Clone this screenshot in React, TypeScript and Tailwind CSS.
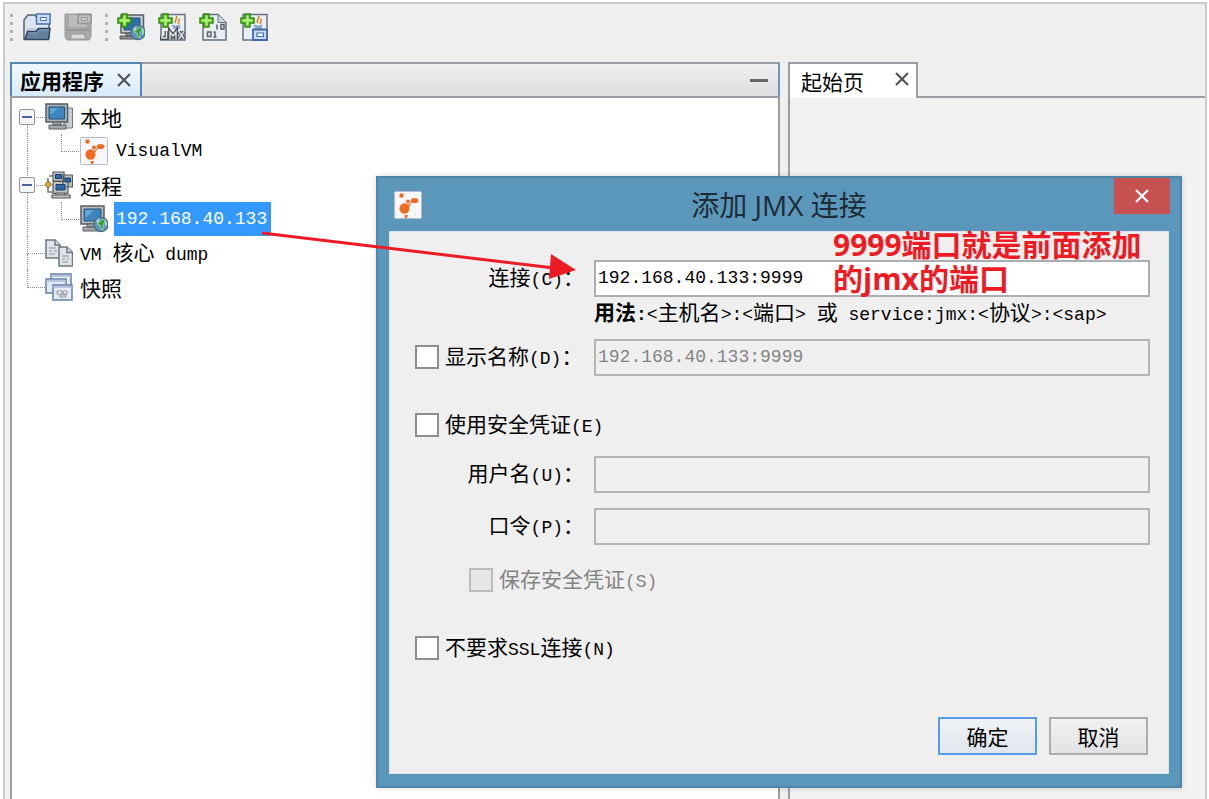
import type { ReactNode } from "react";
import clsx from "clsx";

type IconProps = { className?: string };

function Plus() {
  return (
    <>
      <path d="M5 1h5v4h4v5h-4v4H5v-4H1V5h4z" fill="#7fd63c" stroke="#2f8a12" strokeWidth="1.500" />
      <path d="M7.500 3v9M3 7.500h9" stroke="#b4f07c" strokeWidth="1.800" />
    </>
  );
}

function Globe() {
  return (
    <>
      <circle cx="21" cy="19.500" r="7" fill="#5f97c4" stroke="#4a7387" strokeWidth="1.500" />
      <path d="M16 16a7 7 0 0 1 4-3l-1 3-1 3zM25 14a7 7 0 0 1 2 6l-2 2z" fill="#a9cfe0" />
      <path d="M17 19l6-5 2 2-2 4v5l-2-1-1-4z" fill="#2fa32c" stroke="#c4e6c8" strokeWidth=".6" />
    </>
  );
}

function JavaCup() {
  return (
    <>
      <path
        d="M18 3c3 2-3 4 0 7M22 6c-3 2 0 3-2 5"
        fill="none"
        stroke="#e8862c"
        strokeWidth="1.600"
      />
      <path d="M14 12.500c2 1 6 1 8 0M15 15h7" fill="none" stroke="#6b93c4" strokeWidth="1.500" />
    </>
  );
}

function OpenIcon() {
  return (
    <svg viewBox="0 0 28 28" className="size-7 shrink-0" aria-hidden="true">
      <path d="M1 26V7l4-5h7l2 3h12v20z" fill="#dbe6f2" stroke="#55606c" strokeWidth="1.500" />
      <path d="M3 15h22v6H3z" fill="#c3d2e2" />
      <path d="M13.500 1H27v10H13.500z" fill="#c9dbf6" stroke="#4f74ac" strokeWidth="1.500" />
      <path d="M17.500 4.500h6v3h-6z" fill="#fff" stroke="#4f74ac" />
      <path d="M2 26.500l2.500-8H13l2.500-3H27l-1.500 11z" fill="#64819f" stroke="#34465a" strokeWidth="1.500" />
      <path d="M5.500 20h8.500l2.500-3H26" fill="none" stroke="#89a3bd" />
    </svg>
  );
}

function SaveIcon() {
  return (
    <svg viewBox="0 0 28 28" className="size-7 shrink-0" aria-hidden="true">
      <path d="M1 1h26v23l-2 3H3l-2-3z" fill="#a6a8aa" stroke="#96989a" />
      <path d="M5 2h18v12H5z" fill="#bbbcbe" />
      <path d="M14 1.500h13v9H14z" fill="#bcbec1" stroke="#919497" strokeWidth="1.500" />
      <path d="M17.500 4.500h6v3h-6z" fill="#d0d0d0" stroke="#999" />
      <path d="M2 17h24" stroke="#949698" strokeWidth="2" />
      <path d="M8 21h12l2 5H6z" fill="#dadada" stroke="#999" />
    </svg>
  );
}

function AddHostIcon() {
  return (
    <svg viewBox="0 0 28 28" className="size-7 shrink-0" aria-hidden="true">
      <path d="M4 2h22.500v18H4z" fill="#c9ccce" stroke="#5a6065" strokeWidth="1.500" />
      <path d="M7 5h16v12H7z" fill="#2f6fa8" stroke="#24567f" />
      <path d="M9 20h10v3H9zM3 23h19v3H3z" fill="#8c9196" stroke="#555" />
      <Globe />
      <Plus />
    </svg>
  );
}

function AddJmxIcon() {
  return (
    <svg viewBox="0 0 28 28" className="size-7 shrink-0" aria-hidden="true">
      <path d="M3 1.500h24v25.500H3z" fill="#e9eff7" stroke="#697382" strokeWidth="1.500" />
      <JavaCup />
      <path
        d="M8.500 18v7H4v-2M12 26.500V19l3 4 3-4v7.500M21 18.500l5 7.500M26 18.500L21 26"
        fill="none"
        stroke="#4b5056"
        strokeWidth="4"
      />
      <path
        d="M8.500 18v7H4v-2M12 26.500V19l3 4 3-4v7.500M21 18.500l5 7.500M26 18.500L21 26"
        fill="none"
        stroke="#e4e5e8"
        strokeWidth="1.400"
      />
      <Plus />
    </svg>
  );
}

function AddDumpIcon() {
  return (
    <svg viewBox="0 0 28 28" className="size-7 shrink-0" aria-hidden="true">
      <path d="M4 1.500h15l8 8V27H4z" fill="#e9eef3" stroke="#65727c" strokeWidth="1.500" />
      <path d="M19 1.500v8h8" fill="#cfd7de" stroke="#65727c" />
      <path
        d="M8.500 19h3.500v4.500H8.500zM16 18.500v5.500M18 11.500v5M22 11.500h3v4.500h-3zM14.500 19h1.500M14.500 24h3"
        fill="none"
        stroke="#575e66"
        strokeWidth="1.500"
      />
      <Plus />
    </svg>
  );
}

function AddSnapshotIcon() {
  return (
    <svg viewBox="0 0 28 28" className="size-7 shrink-0" aria-hidden="true">
      <path d="M3 1.500h24v25.500H3z" fill="#e9eff7" stroke="#697382" strokeWidth="1.500" />
      <JavaCup />
      <path d="M13 16.500h14V27H13z" fill="#c9dbf6" stroke="#3f69a8" strokeWidth="1.800" />
      <path d="M17 20h6.500v3.500H17z" fill="#fff" stroke="#3f69a8" strokeWidth="1.200" />
      <Plus />
    </svg>
  );
}

function LocalIcon() {
  return (
    <svg viewBox="0 0 28 28" className="size-7 shrink-0" aria-hidden="true">
      <path d="M19 5h8.500v20H19z" fill="#c9ccd0" stroke="#74797e" />
      <path d="M1 1h21.500v18H1z" fill="#aeb2b6" stroke="#555c62" strokeWidth="1.500" />
      <path d="M4 4h15.500v12H4z" fill="#3d86c2" stroke="#234f78" />
      <path d="M5 5h8l-6 6H5z" fill="#64a5d8" />
      <path d="M8 19h8v3H8zM4 22h17v4H4z" fill="#a4a8ac" stroke="#5b6065" />
    </svg>
  );
}

function VisualVmIcon({ className }: IconProps) {
  return (
    <svg viewBox="0 0 28 28" className={clsx("size-7 shrink-0", className)} aria-hidden="true">
      <rect x=".5" y=".5" width="27" height="27" rx="1" fill="#f6f7fa" stroke="#b4bccb" />
      <g fill="#ef6c22">
        <circle cx="7.500" cy="4.500" r="2.200" />
        <circle cx="14" cy="10.500" r="2" />
        <ellipse cx="20.500" cy="9.500" rx="3.800" ry="2.600" />
        <ellipse cx="10.500" cy="17.500" rx="5" ry="5.200" />
        <path d="M11 12l3 2 5-4-5 7zM10.500 24h3.500l-1 3h-2z" />
      </g>
    </svg>
  );
}

function RemoteIcon() {
  return (
    <svg viewBox="0 0 28 28" className="size-7 shrink-0" aria-hidden="true">
      <path d="M3 7v14h5M4 5h4" fill="none" stroke="#777" strokeWidth="1.500" />
      <g fill="#bfc3bf" stroke="#555b58" strokeWidth="1.200">
        <path d="M8 1h11v9H8zM18 4h9.500v12H18zM8 10.500h15v12H8z" />
        <path d="M11 22h9v2h-9zM7 24h18v3H7z" />
      </g>
      <g fill="#2f68ad" stroke="#1d3c69">
        <path d="M10.500 3.500h6v4h-6zM20 7h5.500v4H20zM11 13.500h9V19h-9z" />
      </g>
      <path d="M3 10l3.500 3.500L3 17l-3-3.500z" fill="#e3a93b" stroke="#8b5c12" />
    </svg>
  );
}

function HostIcon() {
  return (
    <svg viewBox="0 0 28 28" className="size-7 shrink-0" aria-hidden="true">
      <path d="M1 1h23v18H1z" fill="#b9bdc0" stroke="#545b61" strokeWidth="1.500" />
      <path d="M4 4h17v12H4z" fill="#3d83bd" stroke="#234f78" />
      <path d="M5 5h9l-7 7H5z" fill="#64a5d8" />
      <path d="M7 19h8v3H7zM3 22h16v4H3z" fill="#a4a8ac" stroke="#5b6065" />
      <Globe />
    </svg>
  );
}

function DumpIcon() {
  return (
    <svg viewBox="0 0 28 28" className="size-7 shrink-0" aria-hidden="true">
      <g fill="#dfe4e9" stroke="#6c7780" strokeWidth="1.500">
        <path d="M1 1h9l5 5v13H1z" />
        <path d="M10 1v5h5" />
        <path d="M14 8h8l5.500 5.500V27H14z" />
        <path d="M22 8v5.500h5" />
      </g>
      <path
        d="M4 9h7M4 12h3M9 12h3M4 15h6M17 17h7M17 20h3M22 20h2M17 23h6"
        stroke="#8a949c"
        strokeWidth="1.200"
      />
    </svg>
  );
}

function SnapshotIcon() {
  return (
    <svg viewBox="0 0 28 28" className="size-7 shrink-0" aria-hidden="true">
      <g fill="#e4ebf5" stroke="#6680ac" strokeWidth="1.500">
        <path d="M6 1h20v14H6z" />
        <path d="M1 6h20v14H1z" />
        <path d="M8 12h19v15H8z" />
      </g>
      <path d="M6 3h20M1 8h20M8 14h19" stroke="#a9bbd8" strokeWidth="1.500" />
      <path d="M12 18h5v3h-5zM18 18h4v3h-4zM15 22h6v2h-6z" fill="#f4f4f4" stroke="#8a8f96" />
    </svg>
  );
}

function Cross({ className }: IconProps) {
  return (
    <svg viewBox="0 0 14 14" className={clsx("size-[14px]", className)} aria-hidden="true">
      <path d="M1 1l12 12M13 1L1 13" fill="none" stroke="currentColor" strokeWidth="2.200" />
    </svg>
  );
}

function Grip() {
  return (
    <div className="flex flex-col gap-[5px]">
      <span className="size-[3px] bg-[#b0b0b0]" />
      <span className="size-[3px] bg-[#b0b0b0]" />
      <span className="size-[3px] bg-[#b0b0b0]" />
      <span className="size-[3px] bg-[#b0b0b0]" />
    </div>
  );
}

function ToolButton({ label, children }: { label: string; children: ReactNode }) {
  return (
    <button type="button" aria-label={label}>
      {children}
    </button>
  );
}

// Half-width text sits one step smaller than the Chinese characters beside it
function Latin({ children }: { children: ReactNode }) {
  return <span className="font-[Liberation_Mono,monospace] text-[18px]">{children}</span>;
}

type RailProps = { up?: boolean; down?: boolean; across?: boolean; className: string };

function Rail({ up, down, across, className }: RailProps) {
  return (
    <div className={clsx("flex flex-col self-stretch", className)}>
      <div
        className={clsx(
          "flex-1 border-dotted border-[#8c8c8c]",
          up && "border-l",
          across && "border-b"
        )}
      />
      <div className={clsx("flex-1 border-dotted border-[#8c8c8c]", down && "border-l")} />
    </div>
  );
}

type NodeProps = {
  icon: ReactNode;
  children: ReactNode;
  up?: boolean;
  down?: boolean;
  expander?: boolean;
};

function TreeNode({ icon, children, up, down, expander }: NodeProps) {
  return (
    <div className="relative flex h-[34px] items-center pl-[15px]">
      <Rail up={up} down={down} across className="w-[18px]" />
      {expander && (
        <button
          type="button"
          aria-label="折叠"
          className="absolute left-[7px] flex size-4 items-center justify-center rounded-xs border border-[#959595] bg-[#f5f5f5]"
        >
          <span className="h-[2px] w-[10px] bg-[#4b63a0]" />
        </button>
      )}
      {icon}
      <span className="ml-[7px] whitespace-pre">{children}</span>
    </div>
  );
}

function TreeLeaf({ icon, children, selected, down }: NodeProps & { selected?: boolean }) {
  return (
    <div className="flex h-[34px] items-center pl-[15px]">
      <Rail up down={down} className="w-[34px]" />
      <Rail up across className="mr-px w-[18px]" />
      {icon}
      <span
        className={clsx(
          "ml-[6px] flex h-full items-center pr-1 pl-[2px]",
          selected && "bg-[#3399ff] text-white"
        )}
      >
        {children}
      </span>
    </div>
  );
}

function Tree() {
  return (
    <ul className="pt-[2px]">
      <li>
        <TreeNode icon={<LocalIcon />} down expander>
          本地
        </TreeNode>
        <ul>
          <li>
            <TreeLeaf icon={<VisualVmIcon />} down>
              <Latin>VisualVM</Latin>
            </TreeLeaf>
          </li>
        </ul>
      </li>
      <li>
        <TreeNode icon={<RemoteIcon />} up down expander>
          远程
        </TreeNode>
        <ul>
          <li>
            <TreeLeaf icon={<HostIcon />} down selected>
              <Latin>192.168.40.133</Latin>
            </TreeLeaf>
          </li>
        </ul>
      </li>
      <li>
        <TreeNode icon={<DumpIcon />} up down>
          <Latin>VM </Latin>核心<Latin> dump</Latin>
        </TreeNode>
      </li>
      <li>
        <TreeNode icon={<SnapshotIcon />} up>
          快照
        </TreeNode>
      </li>
    </ul>
  );
}

const box =
  "size-6 shrink-0 appearance-none border-2 border-[#8e8e8e] bg-white disabled:border-[#bcbcbc] disabled:bg-[#e6e6e6]";

const field =
  "h-[37px] w-full min-w-0 border-2 border-[#abadb3] bg-white px-[2px] font-[Liberation_Mono,monospace] text-[18px] outline-none disabled:border-[#b4b4b4] disabled:bg-[#efefef] disabled:text-[#838383]";

const row = "grid h-[37px] grid-cols-[169px_1fr] items-center gap-[10px]";

function JmxDialog() {
  return (
    <section
      role="dialog"
      aria-labelledby="dialog-title"
      className="absolute top-[176px] right-[27px] left-[376px] flex h-[612px] flex-col border-2 border-[#4f86a8] bg-[#5b97bb] px-[11px] pb-[12px] shadow-[0_0_6px_rgba(0,0,0,0.15)]"
    >
      <header className="relative flex h-[53px] items-center justify-center">
        <VisualVmIcon className="absolute left-[5px]" />
        <h1
          id="dialog-title"
          className="font-[Open_Sans,Noto_Sans_CJK_SC,sans-serif] text-[28px] text-[#1d2b36]"
        >
          添加 JMX 连接
        </h1>
        <button
          type="button"
          aria-label="关闭"
          className="absolute -right-px top-0 flex h-9 w-14 items-center justify-center bg-[#c75050] text-white"
        >
          <Cross />
        </button>
      </header>

      <form className="flex flex-1 flex-col border border-[#d9e6ee] bg-[#efefef] pt-[27px] pr-[18px] pb-[18px] pl-[25px]">
        <div className={row}>
          <label htmlFor="connection" className="text-right whitespace-nowrap">
            连接<Latin>(C)</Latin>：
          </label>
          <input id="connection" className={field} defaultValue="192.168.40.133:9999" />
        </div>
        <p className="ml-[179px] flex h-[34px] items-center whitespace-pre">
          <span>
            <b>
              用法<Latin>:</Latin>
            </b>
            <Latin>&lt;</Latin>主机名<Latin>&gt;:&lt;</Latin>端口<Latin>&gt; </Latin>或
            <Latin> service:jmx:&lt;</Latin>协议<Latin>&gt;:&lt;sap&gt;</Latin>
          </span>
        </p>

        <div className={clsx(row, "mt-2")}>
          <label className="flex items-center gap-[6px] whitespace-nowrap">
            <input type="checkbox" className={box} />
            <span>
              显示名称<Latin>(D)</Latin>：
            </span>
          </label>
          <input
            aria-label="显示名称"
            className={field}
            defaultValue="192.168.40.133:9999"
            disabled
          />
        </div>

        <label className="mt-[31px] flex h-[37px] items-center gap-[6px]">
          <input type="checkbox" className={box} />
          <span>
            使用安全凭证<Latin>(E)</Latin>
          </span>
        </label>

        <div className={clsx(row, "mt-3")}>
          <label htmlFor="user" className="text-right whitespace-nowrap">
            用户名<Latin>(U)</Latin>：
          </label>
          <input id="user" className={field} disabled />
        </div>
        <div className={clsx(row, "mt-[15px]")}>
          <label htmlFor="password" className="text-right whitespace-nowrap">
            口令<Latin>(P)</Latin>：
          </label>
          <input id="password" type="password" className={field} disabled />
        </div>

        <label className="mt-[17px] ml-[54px] flex h-[37px] items-center gap-[6px] text-[#838383]">
          <input type="checkbox" className={box} disabled />
          <span>
            保存安全凭证<Latin>(S)</Latin>
          </span>
        </label>
        <label className="mt-[31px] flex h-[37px] items-center gap-[6px]">
          <input type="checkbox" className={box} />
          <span>
            不要求<Latin>SSL</Latin>连接<Latin>(N)</Latin>
          </span>
        </label>

        <div className="mt-auto flex justify-end gap-3 pr-[2px]">
          <button
            type="button"
            className="h-[38px] w-[99px] border-2 border-[#569de5] bg-linear-to-b from-[#f0f2f4] to-[#e0e6ee]"
          >
            确定
          </button>
          <button
            type="button"
            className="h-[38px] w-[99px] border-2 border-[#acacac] bg-linear-to-b from-[#f1f1f1] to-[#e3e3e3]"
          >
            取消
          </button>
        </div>
      </form>
    </section>
  );
}

export default function App() {
  return (
    <div className="relative flex min-h-screen flex-col overflow-hidden bg-white pt-[2px] pr-[2px] pl-[3px] font-[Noto_Sans_CJK_SC,sans-serif] text-[21px] leading-[34px] text-black">
      <div className="flex flex-1 flex-col border-2 border-b-0 border-[#cacaca] bg-[#efefef]">
        <div role="toolbar" className="flex h-[58px] items-center pb-[12px] pl-[5px]">
          <Grip />
          <div className="flex gap-[13px] pl-[10px]">
            <ToolButton label="打开"><OpenIcon /></ToolButton>
            <ToolButton label="保存"><SaveIcon /></ToolButton>
          </div>
          <div className="w-[13px]" />
          <Grip />
          <div className="flex gap-[13px] pl-[9px]">
            <ToolButton label="添加主机"><AddHostIcon /></ToolButton>
            <ToolButton label="添加 JMX 连接"><AddJmxIcon /></ToolButton>
            <ToolButton label="添加核心 dump"><AddDumpIcon /></ToolButton>
            <ToolButton label="添加快照"><AddSnapshotIcon /></ToolButton>
          </div>
        </div>

        <main className="grid flex-1 grid-cols-[770fr_417fr] gap-2 pl-[5px]">
          <section className="border-2 border-b-0 border-[#9c9ca4] bg-white">
            <div className="-mx-[2px] -mt-[2px] flex h-9 items-stretch justify-between border-2 border-[#9c9ca4] border-r-[#5f9cc4] bg-linear-to-b from-[#f0f0f0] to-[#dedede]">
              <div className="-mt-[2px] -ml-[2px] flex w-[132px] items-center justify-between border-2 border-b-0 border-[#5089b0] bg-linear-to-b from-[#f0f8fe] to-[#d8ebfa] pr-[9px] pl-2 font-bold">
                应用程序
                <button type="button" aria-label="关闭" className="text-[#555]">
                  <Cross />
                </button>
              </div>
              <button type="button" aria-label="最小化" className="flex items-center pr-[10px]">
                <span className="h-[3px] w-[18px] bg-[#666]" />
              </button>
            </div>
            <Tree />
          </section>

          <section className="flex flex-col border-l-2 border-[#9c9ca4] bg-[#f2f2f2]">
            <div className="flex h-9">
              <div className="flex w-[128px] items-center justify-between border-t-2 border-r-2 border-[#9c9ca4] bg-white pr-[7px] pl-[11px]">
                起始页
                <button type="button" aria-label="关闭" className="pb-1 text-[#555]">
                  <Cross />
                </button>
              </div>
              <div className="flex-1 border-b-2 border-[#9c9ca4] bg-[#efefef]" />
            </div>
          </section>
        </main>
      </div>

      <JmxDialog />

      <svg
        viewBox="0 0 320 50"
        className="absolute top-[230px] left-[260px] h-[50px] w-[320px]"
        aria-hidden="true"
      >
        <path d="M2 3L294 38" stroke="#ed1c24" strokeWidth="3" />
        <path d="M291 24l25 16-27 9z" fill="#ed1c24" />
      </svg>
      <p className="absolute top-[228px] left-[833px] font-[Open_Sans,Noto_Sans_CJK_SC,sans-serif] text-[30px] leading-[34px] font-bold whitespace-nowrap text-[#ed1c24]">
        9999端口就是前面添加
        <br />
        的jmx的端口
      </p>
    </div>
  );
}
